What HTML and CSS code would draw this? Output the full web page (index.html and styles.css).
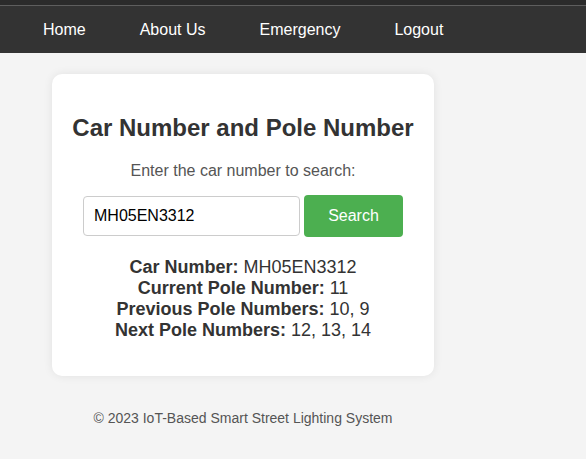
FILE: index.html
```html
<!DOCTYPE html>
<html>
<head>
<meta charset="utf-8">
<link rel="stylesheet" href="styles.css">
</head>
<body>
<nav class="topnav">
  <a href="#">Home</a>
  <a href="#">About Us</a>
  <a href="#">Emergency</a>
  <a href="#">Logout</a>
</nav>
<main class="wrap">
  <section class="card">
    <h2 class="title">Car Number and Pole Number</h2>
    <p class="lead">Enter the car number to search:</p>
    <form class="search">
      <input class="field" type="text" value="MH05EN3312">
      <button class="btn" type="button">Search</button>
    </form>
    <div class="results">
      <div><b>Car Number:</b> MH05EN3312</div>
      <div><b>Current Pole Number:</b> 11</div>
      <div><b>Previous Pole Numbers:</b> 10, 9</div>
      <div><b>Next Pole Numbers:</b> 12, 13, 14</div>
    </div>
  </section>
  <footer class="foot">© 2023 IoT-Based Smart Street Lighting System</footer>
</main>
</body>
</html>
```
FILE: styles.css
```css
html, body {
  margin: 0;
  padding: 0;
}
body {
  background: #f4f4f4;
  font-family: "Liberation Sans", Arial, sans-serif;
  color: #333;
}
.topnav {
  display: flex;
  background: #333;
  border-top: 5px solid #2b2b2b;
  box-shadow: inset 0 1px 0 #5e5e5e;
  height: 48px;
  align-items: center;
  padding-left: 16px;
}
.topnav a {
  color: #fff;
  text-decoration: none;
  font-size: 16px;
  padding: 2px 27px 0;
}
.wrap {
  width: 382px;
  margin-left: 52px;
  padding-top: 21px;
}
.card {
  background: #fff;
  border-radius: 10px;
  box-shadow: 0 0 10px rgba(0, 0, 0, 0.08);
  padding: 20px 20px 20px;
  text-align: center;
  height: 302px;
  box-sizing: border-box;
}
.title {
  font-size: 24px;
  margin: 20px 0 20px;
  color: #333;
}
.lead {
  font-size: 16px;
  color: #555;
  margin: 0 0 15px;
}
.search {
  display: flex;
  justify-content: center;
  align-items: center;
  gap: 4px;
  margin: 0;
}
.field {
  width: 217px;
  height: 40px;
  box-sizing: border-box;
  border: 1px solid #ccc;
  border-radius: 4px;
  padding: 0 10px;
  font-family: "Liberation Sans", Arial, sans-serif;
  font-size: 16px;
  color: #000;
}
.btn {
  width: 99px;
  height: 42px;
  border: none;
  border-radius: 4px;
  background: #4caf50;
  color: #fff;
  font-family: "Liberation Sans", Arial, sans-serif;
  font-size: 16px;
}
.results {
  margin-top: 20px;
  font-size: 18px;
  color: #333;
}
.foot {
  text-align: center;
  font-size: 14px;
  color: #555;
  margin-top: 34px;
}
```
